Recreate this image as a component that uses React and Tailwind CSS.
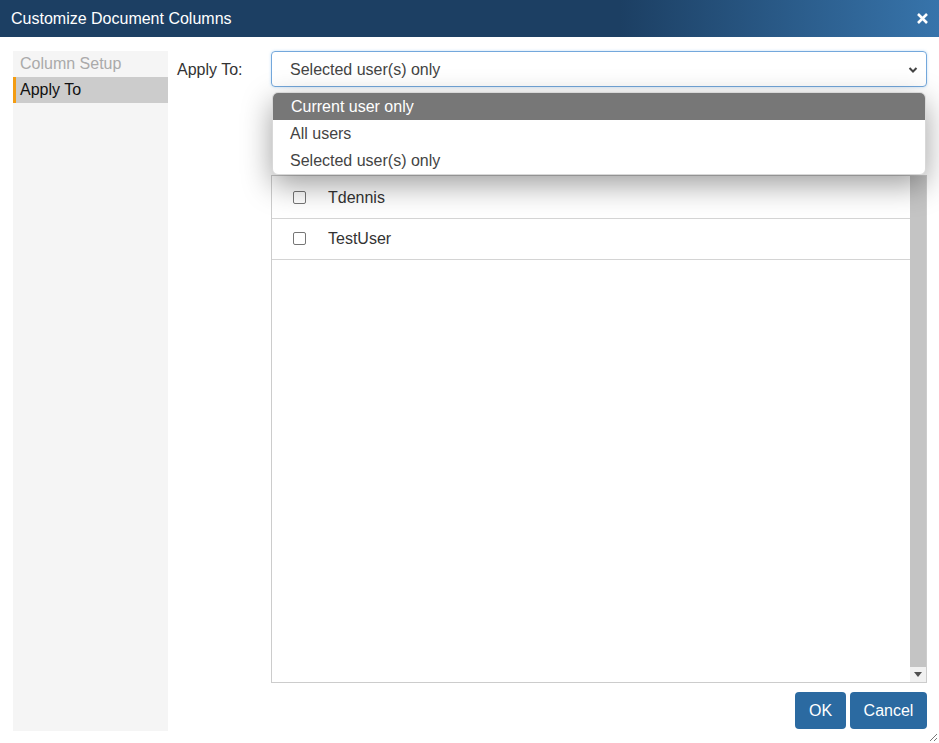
const options = ["Current user only", "All users", "Selected user(s) only"];
const users = ["Tdennis", "TestUser"];

const UserRow = ({ name }) => (
  <div className="flex items-center h-[41px] border-b border-[#d4d4d4]">
    <span className="ml-[21px] -mt-[2px] w-[13px] h-[13px] border border-[#767676] rounded-[2px] bg-white"></span>
    <span className="ml-[22px] text-[16px] text-[#333]">{name}</span>
  </div>
);

const App = () => {
  return (
    <div
      className="w-[939px] h-[743px] flex flex-col bg-white relative overflow-hidden"
      style={{ fontFamily: '"Liberation Sans", Arial, sans-serif' }}
    >
      <div className="h-[37px] flex items-center justify-between pl-[11px] pr-[11px] bg-[linear-gradient(to_right,#1c3f63_66%,#3774ab)] text-white text-[16px]">
        <span>Customize Document Columns</span>
        <svg width="11" height="11" viewBox="0 0 11 11">
          <path d="M1 1L10 10M10 1L1 10" stroke="white" strokeWidth="2.6" />
        </svg>
      </div>

      <div className="flex flex-1 pt-[14px] pl-[13px] pr-[12px] pb-[12px]">
        <div className="w-[155px] bg-[#f5f5f5] text-[16px]">
          <div className="h-[26px] flex items-center pl-[7px] text-[#aaa]">Column Setup</div>
          <div className="h-[26px] flex items-center pl-[4px] bg-[#cccccc] border-l-[3px] border-[#f39c12] text-[#111]">
            Apply To
          </div>
        </div>

        <div className="flex-1 flex flex-col pb-[2px]">
          <div className="flex h-[36px] relative">
            <div className="w-[103px] pl-[9px] pt-[7px] text-[16px] text-[#333]">Apply To:</div>
            <div className="flex-1 flex items-center justify-between border border-[#74a8dc] rounded-[4px] pl-[18px] pr-[8px] pt-[2px] text-[16px] text-[#444] shadow-[0_0_3px_rgba(102,175,233,0.4)]">
              <span>Selected user(s) only</span>
              <svg width="10" height="8" viewBox="0 0 10 8">
                <path d="M1.5 2L5 5.5L8.5 2" stroke="#444" strokeWidth="2" fill="none" />
              </svg>
            </div>

            <div className="absolute left-[104px] right-[1px] top-[41px] z-10 bg-white rounded-[6px] border border-[#d8d8d8] overflow-hidden shadow-[0_10px_30px_rgba(0,0,0,0.38)] text-[16px]">
              {options.map((opt, idx) => (
                <div
                  key={idx}
                  className={
                    idx === 0
                      ? "h-[27px] flex items-center pl-[18px] bg-[#777777] text-white"
                      : "h-[27px] flex items-center pl-[17px] text-[#444]"
                  }
                >
                  {opt}
                </div>
              ))}
            </div>
          </div>

          <div className="ml-[103px] mt-[88px] flex-1 border border-[#cccccc] flex">
            <div className="flex-1 flex flex-col pt-[2px]">
              {users.map((u) => (
                <UserRow key={u} name={u} />
              ))}
            </div>
            <div className="w-[16px] bg-[#c4c4c4] flex flex-col justify-end">
              <div className="h-[15px] bg-[#f1f1f1] flex items-center justify-center">
                <svg width="8" height="5" viewBox="0 0 8 5">
                  <path d="M0 0H8L4 5Z" fill="#505050" />
                </svg>
              </div>
            </div>
          </div>

          <div className="flex justify-end gap-[4px] mt-[9px]">
            <button className="w-[51px] h-[37px] bg-[#2b6aa1] text-white text-[16px] rounded-[4px]">OK</button>
            <button className="w-[77px] h-[37px] bg-[#2b6aa1] text-white text-[16px] rounded-[4px]">Cancel</button>
          </div>
        </div>
      </div>

      <svg className="absolute right-[1px] bottom-[1px]" width="10" height="10" viewBox="0 0 10 10">
        <path d="M9 2L2 9M9 6L6 9" stroke="#777" strokeWidth="1" />
      </svg>
    </div>
  );
};

export default App;
